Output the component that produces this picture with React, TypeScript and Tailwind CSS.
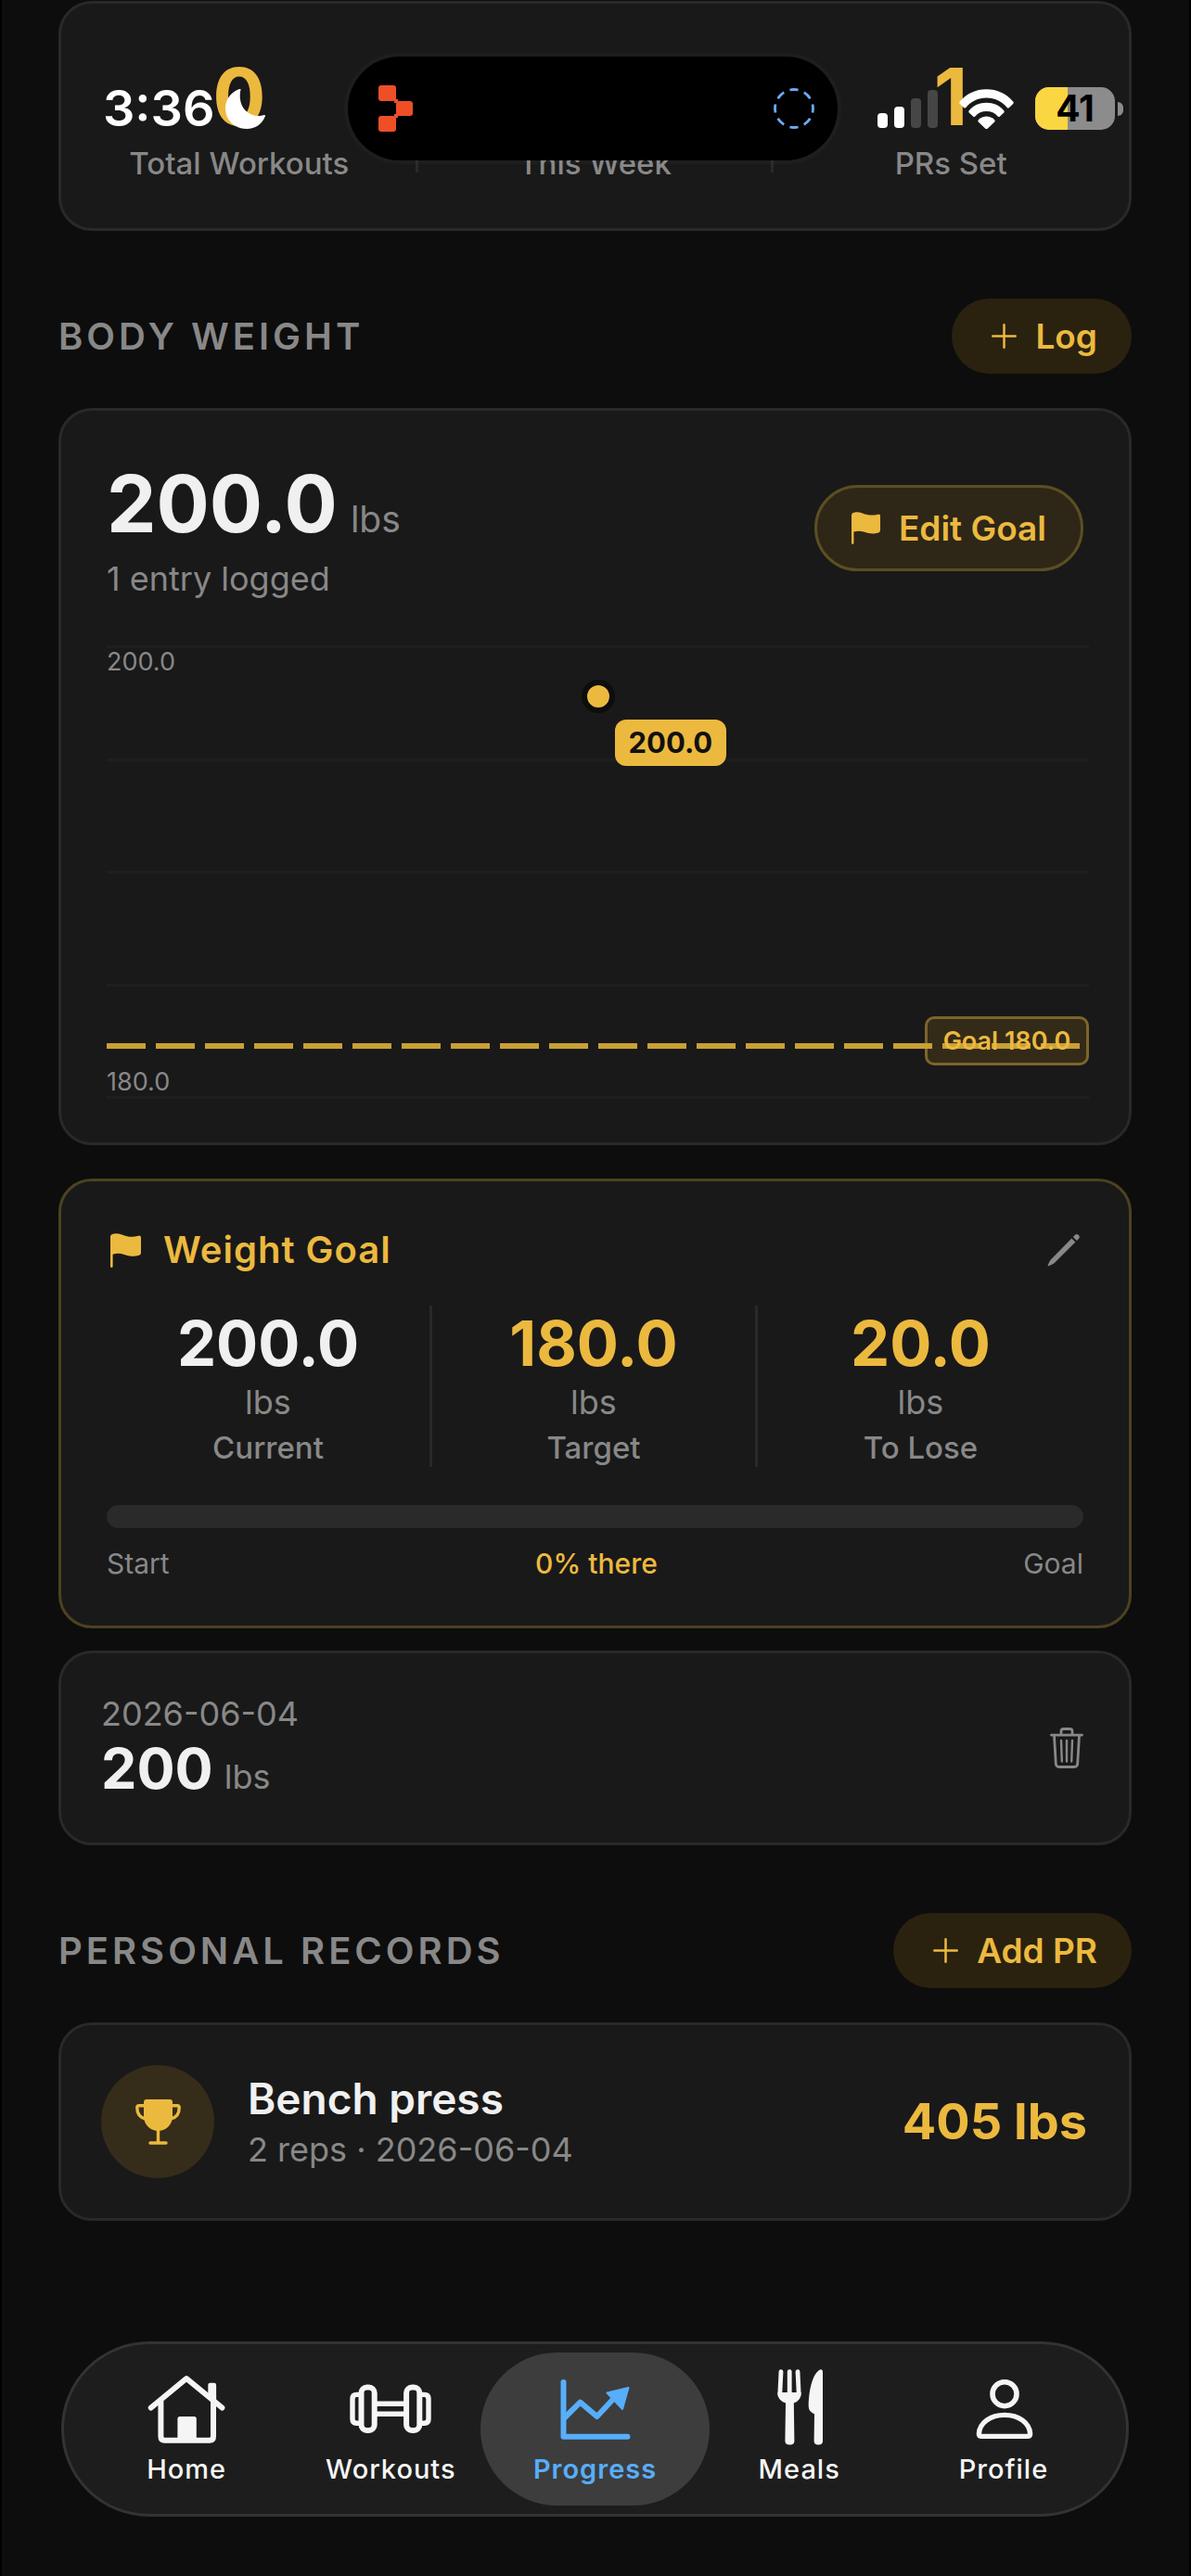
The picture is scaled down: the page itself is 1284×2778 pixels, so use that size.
import { clsx } from "clsx";
import type { ReactNode } from "react";

const STATS = [
  { label: "Total Workouts", value: "0" },
  { label: "This Week", value: "" },
  { label: "PRs Set", value: "1" },
];

const GOAL_COLUMNS = [
  { label: "Current", value: "200.0", highlight: false },
  { label: "Target", value: "180.0", highlight: true },
  { label: "To Lose", value: "20.0", highlight: true },
];

const SIGNAL_BARS = [
  { className: "h-4 bg-white" },
  { className: "h-[23px] bg-white" },
  { className: "h-8 bg-[#464646]" },
  { className: "h-[41px] bg-[#464646]" },
];

const TABS = [
  { label: "Home", icon: HomeIcon },
  { label: "Workouts", icon: DumbbellIcon },
  { label: "Progress", icon: ChartIcon },
  { label: "Meals", icon: MealsIcon },
  { label: "Profile", icon: ProfileIcon },
];

const ACTIVE_TAB = "Progress";

/* ---------- icons ---------- */

function TabSvg({ children }: { children: ReactNode }) {
  return (
    <svg
      viewBox="0 0 96 84"
      className="h-[84px] w-24"
      fill="none"
      stroke="currentColor"
      strokeWidth="6"
      strokeLinecap="round"
      strokeLinejoin="round"
      aria-hidden="true"
    >
      {children}
    </svg>
  );
}

function HomeIcon() {
  return (
    <TabSvg>
      <path d="M9.8 41.5 48 10l38.4 31.5" />
      <path d="M20.4 35v37.5q0 4.2 4.2 4.2h48.2q4.2 0 4.2-4.2V35" />
      <path d="M71.3 28V17q0-2.3 2.3-2.3h4.2q2.3 0 2.3 2.3v18z" fill="currentColor" stroke="none" />
      <path d="M38.4 77V53.5q0-2.5 2.5-2.5h15.4q2.5 0 2.5 2.5V77z" fill="currentColor" stroke="none" />
    </TabSvg>
  );
}

function DumbbellIcon() {
  return (
    <TabSvg>
      <rect x="16.5" y="19.6" width="14.2" height="46.4" rx="6" />
      <rect x="65.1" y="19.6" width="14.2" height="46.4" rx="6" />
      <path d="M15 27.4h-3.5q-4.5 0-4.5 4.5v21.8q0 4.5 4.5 4.5H15" strokeWidth="5.4" />
      <path d="M81 27.4h3.5q4.5 0 4.5 4.5v21.8q0 4.5-4.5 4.5H81" strokeWidth="5.4" />
      <path d="M33 37.3h30M33 48.3h30" strokeWidth="5.4" strokeLinecap="butt" />
    </TabSvg>
  );
}

function ChartIcon() {
  return (
    <TabSvg>
      <path d="M13.5 14v58.8h69" />
      <path d="M14 53l17.5-17.4L49.6 51 71 28" />
      <path d="M83.5 20 60.5 25.5 77 43z" fill="currentColor" strokeWidth="2" />
    </TabSvg>
  );
}

function MealsIcon() {
  return (
    <TabSvg>
      <path d="M28 2.6 26.8 27M37.2 2.6V27M46 2.6 47.2 27" strokeWidth="4.8" />
      <path
        d="M24.4 25h25.2q.6 8.5-7.8 11.4l.6 41.2q0 4-5 4t-5-4l.6-41.2Q23.8 33.5 24.4 25z"
        fill="currentColor"
        stroke="none"
      />
      <path
        d="M73 3v74.5q0 4-4.7 4t-4.7-4L64 48.5q-6.3-3-6.3-8.5C58 22 62 5 70 .4q3-.6 3 2.6z"
        fill="currentColor"
        stroke="none"
      />
    </TabSvg>
  );
}

function ProfileIcon() {
  return (
    <TabSvg>
      <circle cx="49" cy="26.7" r="13" strokeWidth="5.6" />
      <path
        d="M21.4 69.5C22 58 33.5 49.4 49 49.4S76 58 76.6 69.5q0 2.9-3 2.9H24.4q-3 0-3-2.9z"
        strokeWidth="5.4"
      />
    </TabSvg>
  );
}

function FlagIcon({ className }: { className?: string }) {
  return (
    <svg viewBox="0 0 33 37" className={className} fill="currentColor" aria-hidden="true">
      <path d="M0 3.5Q0 2 1.4 1.2C4 0 8-.2 12.5 1.4c6 2.2 11 3.2 17.6 1.3Q33 2 33 4.5V21q0 2.2-2 2.8c-6 1.8-10.500 1-16-.8-4.500-1.400-8.500-1.500-12.400-.3V35.500q0 1.500-1.300 1.500T0 35.500z" />
    </svg>
  );
}

function PlusIcon() {
  return (
    <svg viewBox="0 0 27 27" className="size-[27px]" stroke="currentColor" strokeWidth="2.5" strokeLinecap="round" aria-hidden="true">
      <path d="M13.5 1.3v24.4M1.3 13.5h24.4" />
    </svg>
  );
}

function PencilIcon() {
  return (
    <svg viewBox="0 0 36 36" className="size-9" fill="currentColor" aria-hidden="true">
      <path d="M26.3 5.4 30.4 9.500 7.800 32q-.8.800-1.900 1.300L1.600 35.200Q.2 35.600.7 34.200L2.700 30.100q.5-1.100 1.300-1.900z" />
      <path d="M27.900 3.900 30.200 1.600q1.600-1.400 3.200 0l.8.800q1.500 1.600 0 3.200L31.900 7.900z" />
    </svg>
  );
}

function TrashIcon() {
  return (
    <svg
      viewBox="0 0 36 44"
      className="h-11 w-9"
      fill="none"
      stroke="currentColor"
      strokeWidth="2.8"
      strokeLinecap="round"
      strokeLinejoin="round"
      aria-hidden="true"
    >
      <path d="M1.5 8.2h33M12 8V4.2q0-2.7 2.7-2.7h6.6q2.7 0 2.7 2.7V8" />
      <path d="M4.5 8.5 6.3 39q.2 3.5 3.7 3.5h16q3.5 0 3.7-3.5L31.5 8.5" />
      <path d="M12 14l.8 22.5M18 14v22.5M24 14l-.8 22.5" strokeWidth="2.4" />
    </svg>
  );
}

function TrophyIcon() {
  return (
    <svg viewBox="0 0 49 49" className="size-[49px]" fill="currentColor" aria-hidden="true">
      <path d="M12 0h25q3 0 3 3v15c0 9-6.500 16-15.500 16S9 27 9 18V3q0-3 3-3z" />
      <path
        d="M9.500 6.800H4q-2.200 0-2.200 2.200C1.800 15 5 19.500 10.500 20.800M39.500 6.800H45q2.200 0 2.200 2.200C47.200 15 44 19.500 38.500 20.800"
        fill="none"
        stroke="currentColor"
        strokeWidth="3.4"
      />
      <path d="M22.800 32h3.400v13.300H33q1.700 0 1.700 1.700T33 48.700H16q-1.700 0-1.700-1.700t1.700-1.700h6.800z" />
    </svg>
  );
}

/* ---------- status bar ---------- */

function StatusBar() {
  return (
    <div className="absolute inset-x-0 top-0 grid grid-cols-[1fr_528px_1fr] items-center pt-[61px] pr-1.5">
      <div className="flex items-center gap-3 pl-[109px] text-white">
        <span className="text-[54px] leading-[64px] font-semibold">3:36</span>
        <svg viewBox="0 0 43 43" className="size-[43px]" fill="currentColor" aria-label="Do not disturb">
          <path d="M16.5.3q-1 4.5-.7 9.200c.8 11.500 9 19.500 20.200 19.500q3 0 5.500-.9 2-.5 1.300 1.400C39.500 38 32 43 23 43 10 43 0 33.500 0 21 0 12 5 4 14.500.2q2.300-1 2 .1z" />
        </svg>
      </div>

      <div className="flex h-28 items-center justify-between rounded-full bg-black pr-6 pl-[33px] shadow-[0_0_0_4px_rgba(255,255,255,0.025)]">
        <svg viewBox="0 0 38 50" className="h-[50px] w-[38px]" fill="#ee4f27" aria-hidden="true">
          <rect width="19" height="17" rx="3" />
          <rect x="19" y="17" width="18" height="16" rx="3" />
          <rect y="33" width="19" height="17" rx="3" />
          <path d="M17 15h4v4h-4zM17 31h4v4h-4z" />
        </svg>
        <svg viewBox="0 0 46 46" className="size-[46px]" fill="none" aria-hidden="true">
          <circle
            cx="23"
            cy="23"
            r="20.5"
            stroke="#6cabf6"
            strokeWidth="2.8"
            pathLength="80"
            strokeDasharray="5.8 4.2"
            strokeDashoffset="2.9"
          />
        </svg>
      </div>

      <div className="flex items-center justify-end pr-[65px]">
        <div className="mr-[23px] flex items-end gap-[7px]">
          {SIGNAL_BARS.map((bar, i) => (
            <span key={i} className={clsx("w-[11px] rounded", bar.className)} />
          ))}
        </div>
        <svg viewBox="0 0 59 43" className="mr-[23px] h-[43px] w-[59px]" fill="#fff" aria-label="Wi-Fi">
          <path d="M.8 13.6C8 5 18 .3 29.5.3S51 5 58.2 13.6q1 1.2 0 2.3l-4.2 4q-1.2 1-2.3 0C46 13.3 38.5 9.5 29.5 9.5S13 13.3 7.3 19.900q-1.100 1-2.300 0l-4.200-4q-1-1.100 0-2.300z" />
          <path d="M10.700 23.200C15.500 17.500 22 14.800 29.500 14.800s14 2.700 18.800 8.400q1 1.200 0 2.300L44 29.600q-1.200 1-2.300 0C38.500 25.800 34.500 24 29.500 24s-9 1.800-12.200 5.600q-1.100 1-2.300 0l-4.300-4.100q-1-1.100 0-2.300z" />
          <path d="M20.800 33.200c5-5 12.400-5 17.400 0q1 1 0 2.200l-7.300 7q-1.400 1.200-2.800 0l-7.300-7q-1-1.200 0-2.200z" />
        </svg>
        <div className="relative flex h-[46px] w-[86px] items-center justify-center rounded-[15px] bg-[#8c8c8c]">
          <span className="absolute inset-y-0 left-0 w-[41%] rounded-l-[15px] bg-[#fad643]" />
          <span className="relative text-[39px] leading-[46px] font-bold text-black">41</span>
        </div>
        <span className="ml-[3px] h-[15px] w-[6px] rounded-r-full bg-[#8c8c8c]" />
      </div>
    </div>
  );
}

/* ---------- shared pieces ---------- */

function SectionHeader({ title, action }: { title: string; action: string }) {
  return (
    <div className="mt-[73px] mb-[37px] flex items-center justify-between">
      <h2 className="text-[40px] leading-[48px] font-semibold tracking-[4px] text-[#888]">{title}</h2>
      <button
        type="button"
        className="flex h-[81px] items-center gap-5 rounded-full bg-[#2a220f] pr-[37px] pl-[43px] text-[37px] font-semibold text-[#ecb93f]"
      >
        <PlusIcon />
        {action}
      </button>
    </div>
  );
}

function WeightChart() {
  return (
    <div className="relative -mr-1.5 mt-[50px] flex h-[489px] flex-col justify-between">
      {[0, 1, 2, 3, 4].map((line) => (
        <span key={line} className="h-[3px] bg-[#1f1f1f]" />
      ))}

      <span className="absolute top-0 left-0 text-[27px] leading-[36px] text-[#888]">200.0</span>
      <span className="absolute bottom-0 left-0 text-[27px] leading-[36px] text-[#888]">180.0</span>

      <span className="absolute top-[37px] left-1/2 size-9 -translate-x-1/2 rounded-full border-[6px] border-[#0d0d0d] bg-[#ecb93f]" />
      <span className="absolute top-20 left-1/2 ml-[18px] rounded-xl bg-[#ecb93f] px-[15px] text-[31px] leading-[50px] font-bold text-[#111]">
        200.0
      </span>

      <span className="absolute top-[400px] right-0 h-[53px] w-[177px] rounded-[10px] border-[3px] border-[#7d652a] bg-[#332b18]" />
      <svg className="absolute top-[429px] left-0 h-1.5 w-full" aria-hidden="true">
        <line x1="0" y1="3" x2="100%" y2="3" stroke="#c9a035" strokeWidth="6" strokeDasharray="42 11" />
      </svg>
      <span className="absolute top-[400px] right-0 w-[177px] text-center text-[27px] leading-[54px] font-semibold text-[#ecb93f]">
        Goal 180.0
      </span>
    </div>
  );
}

function TabBar() {
  return (
    <nav className="mx-[3px] mt-auto mb-16 flex rounded-full border-[3px] border-[#333] bg-[#1d1d1d] px-[22px] py-[9px]">
      {TABS.map((tab) => {
        const isActive = tab.label === ACTIVE_TAB;
        return (
          <a
            key={tab.label}
            href={`#${tab.label.toLowerCase()}`}
            aria-current={isActive ? "page" : undefined}
            className={clsx(
              "-mx-[13px] flex flex-1 flex-col items-center rounded-full pt-[18px] pb-[21px]",
              isActive ? "bg-[#3d3d3d] text-[#57aefb]" : "text-[#f5f5f5]"
            )}
          >
            <tab.icon />
            <span
              className={clsx(
                "mt-1.5 text-[29px] leading-[36px] tracking-[1px]",
                isActive ? "font-semibold" : "font-medium"
              )}
            >
              {tab.label}
            </span>
          </a>
        );
      })}
    </nav>
  );
}

export default function App() {
  return (
    <div className="relative flex min-h-screen flex-col border-x-2 border-black bg-[#0d0d0d] pt-px pr-[62px] pl-[61px] font-['Inter',sans-serif]">
      <main>
        <section className="grid grid-cols-3 rounded-[36px] border-[3px] border-[#292929] bg-[#191919] pt-[50px] pb-[49px]">
          {STATS.map((stat, i) => (
            <div
              key={stat.label}
              className={clsx(
                "flex flex-col items-center",
                i > 0 && "relative before:absolute before:top-3 before:-left-0.5 before:h-[120px] before:w-[3px] before:bg-[#292929]"
              )}
            >
              <span className="h-[102px] text-[85px] leading-[102px] font-bold text-[#ecb93f]">{stat.value}</span>
              <span className="text-[33px] leading-[41px] font-medium text-[#888]">{stat.label}</span>
            </div>
          ))}
        </section>

        <SectionHeader title="BODY WEIGHT" action="Log" />

        <section className="rounded-[36px] border-[3px] border-[#292929] bg-[#191919] px-[49px] pt-[50px] pb-[47px]">
          <div className="flex items-center justify-between">
            <div>
              <p className="flex items-baseline gap-3.5">
                <span className="text-[85px] leading-[102px] font-bold text-[#f0f0f0]">200.0</span>
                <span className="text-[39px] text-[#888]">lbs</span>
              </p>
              <p className="mt-[7px] text-4xl leading-[44px] text-[#888]">1 entry logged</p>
            </div>
            <button
              type="button"
              className="flex h-[93px] items-center gap-5 rounded-full border-[3px] border-[#5c4e22] bg-[#2e2718] px-[37px] text-[37px] font-semibold text-[#ecb93f]"
            >
              <FlagIcon className="h-[35px] w-[31px]" />
              Edit Goal
            </button>
          </div>
          <WeightChart />
        </section>

        <section className="mt-9 rounded-[36px] border-[3px] border-[#4d4220] bg-[#191919] px-[49px] pt-[50px] pb-[49px]">
          <div className="flex items-center justify-between">
            <h3 className="flex items-center gap-6 pl-1 text-[40px] leading-[48px] font-semibold tracking-[1px] text-[#ecb93f]">
              <FlagIcon className="h-[37px] w-[33px]" />
              Weight Goal
            </h3>
            <button type="button" aria-label="Edit weight goal" className="pr-[3px] text-[#888]">
              <PencilIcon />
            </button>
          </div>

          <div className="mt-9 grid grid-cols-3 divide-x-3 divide-[#292929]">
            {GOAL_COLUMNS.map((col) => (
              <div key={col.label} className="flex flex-col items-center text-[#888]">
                <span
                  className={clsx(
                    "text-[67px] leading-[82px] font-bold",
                    col.highlight ? "text-[#ecb93f]" : "text-[#f0f0f0]"
                  )}
                >
                  {col.value}
                </span>
                <span className="text-4xl leading-[44px]">lbs</span>
                <span className="mt-1.5 text-[33px] leading-[42px] font-medium">{col.label}</span>
              </div>
            ))}
          </div>

          <div
            role="progressbar"
            aria-label="Weight goal progress"
            aria-valuenow={0}
            className="mt-[41px] h-[25px] rounded-full bg-[#2a2a2a]"
          />
          <div className="mt-5 flex justify-between text-[30px] leading-[36px] text-[#888]">
            <span>Start</span>
            <span className="font-medium text-[#ecb93f]">0% there</span>
            <span>Goal</span>
          </div>
        </section>

        <section className="mt-6 flex items-center justify-between rounded-[36px] border-[3px] border-[#292929] bg-[#191919] px-[43px] py-[43px]">
          <div>
            <p className="text-4xl leading-[44px] text-[#888]">2026-06-04</p>
            <p className="flex items-baseline gap-3">
              <span className="text-[61px] leading-[74px] font-bold text-[#f0f0f0]">200</span>
              <span className="text-4xl text-[#888]">lbs</span>
            </p>
          </div>
          <button type="button" aria-label="Delete entry" className="px-1.5 text-[#888]">
            <TrashIcon />
          </button>
        </section>

        <SectionHeader title="PERSONAL RECORDS" action="Add PR" />

        <section className="flex items-center gap-9 rounded-[36px] border-[3px] border-[#292929] bg-[#191919] py-[43px] pr-[45px] pl-[43px]">
          <span className="flex size-[122px] items-center justify-center rounded-full bg-[#352d19] text-[#ecb93f]">
            <TrophyIcon />
          </span>
          <div className="flex-1">
            <h3 className="text-[46px] leading-[54px] font-semibold text-[#f0f0f0]">Bench press</h3>
            <p className="mt-1.5 text-4xl leading-[44px] text-[#888]">2 reps · 2026-06-04</p>
          </div>
          <span className="text-[54px] leading-[66px] font-bold text-[#ecb93f]">405 lbs</span>
        </section>
      </main>

      <TabBar />
      <StatusBar />
    </div>
  );
}
